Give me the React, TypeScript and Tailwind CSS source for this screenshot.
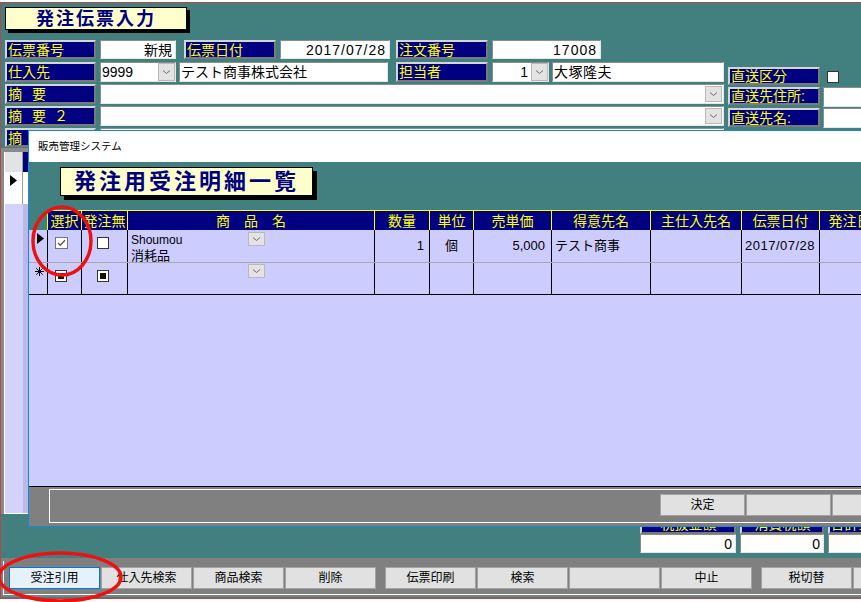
import React from "react";

const LABEL =
  "shrink-0 flex items-center bg-[#000080] text-[#ffff00] leading-none pl-[1px] border-2 border-t-[#d6d6d6] border-l-[#d6d6d6] border-r-[#7a7a7a] border-b-[#7a7a7a] whitespace-nowrap overflow-hidden";
const FIELD =
  "shrink-0 flex items-center bg-white text-black leading-none border border-t-[#8c8c8c] border-l-[#8c8c8c] border-r-[#e6e6e6] border-b-[#e6e6e6] whitespace-nowrap overflow-hidden";
const BTN =
  "shrink-0 flex items-center justify-center h-[22px] border text-[12px] leading-none text-black";
const HCELL =
  "border-l border-t border-[#ffff00] bg-[#000080] text-[#ffff00] text-[14px] leading-none flex items-center justify-center whitespace-nowrap overflow-hidden";
const DCELL = "border-l border-black flex overflow-hidden whitespace-nowrap";

function Chevron() {
  return (
    <svg width="9" height="6" viewBox="0 0 9 6">
      <path d="M1 1.5 L4.5 4.5 L8 1.5" fill="none" stroke="#6b6b6b" strokeWidth="1" />
    </svg>
  );
}

function DropBtn({ className }: { className: string }) {
  return (
    <div className={`shrink-0 flex items-center justify-center bg-[#e3e3e3] border border-[#b9b9b9] ${className}`}>
      <Chevron />
    </div>
  );
}

function Tri() {
  return (
    <svg width="7" height="11" viewBox="0 0 7 11">
      <path d="M0 0 L7 5.5 L0 11 Z" fill="#000" />
    </svg>
  );
}

function Star() {
  return (
    <svg width="9" height="9" viewBox="0 0 9 9">
      <g stroke="#000" strokeWidth="1">
        <line x1="4.5" y1="0" x2="4.5" y2="9" />
        <line x1="0" y1="4.5" x2="9" y2="4.5" />
        <line x1="1.3" y1="1.3" x2="7.7" y2="7.7" />
        <line x1="7.7" y1="1.3" x2="1.3" y2="7.7" />
      </g>
    </svg>
  );
}

function CheckedBox() {
  return (
    <svg width="13" height="12" viewBox="0 0 13 12">
      <rect x="0.5" y="0.5" width="12" height="11" fill="#fff" stroke="#000" strokeDasharray="1 1" />
      <path d="M3 6 L5.2 8.2 L10 3.2" fill="none" stroke="#555" strokeWidth="1.3" />
    </svg>
  );
}

function NullBox() {
  return (
    <div className="w-[12px] h-[12px] bg-white border border-[#333] flex items-center justify-center">
      <div className="w-[6px] h-[6px] bg-[#111]" />
    </div>
  );
}

const COLS =
  "grid grid-cols-[18px_34px_46px_247px_55px_44px_78px_99px_91px_78px_74px]";

export default function App() {
  return (
    <div className="relative w-[861px] h-[602px] overflow-hidden bg-white pt-[2px] font-['Liberation_Sans','Noto_Sans_CJK_JP',sans-serif]">
      {/* main form */}
      <div className="h-[597px] bg-[#428080] border-t border-l border-b border-[#b24848] flex flex-col pl-[4px]">
        {/* title */}
        <div className="mt-[4px] w-[182px] h-[23px] shrink-0 bg-[#ffffcc] border border-black shadow-[3px_3px_0_0_#000] flex items-center justify-center text-[#000080] text-[18px] font-bold tracking-[2px] leading-none">
          発注伝票入力
        </div>

        {/* row 1 */}
        <div className="mt-[10px] h-[19px] flex shrink-0">
          <div className={`${LABEL} w-[91px] h-[19px] text-[14px]`}>伝票番号</div>
          <div className={`${FIELD} ml-[4px] w-[76px] h-[19px] justify-end pr-[3px] text-[14px]`}>新規</div>
          <div className={`${LABEL} ml-[8px] w-[92px] h-[19px] text-[14px]`}>伝票日付</div>
          <div className={`${FIELD} ml-[4px] w-[110px] h-[19px] justify-end pr-[3px] text-[14px] tracking-[1px]`}>2017/07/28</div>
          <div className={`${LABEL} ml-[6px] w-[92px] h-[19px] text-[14px]`}>注文番号</div>
          <div className={`${FIELD} ml-[4px] w-[109px] h-[19px] justify-end pr-[3px] text-[14px] tracking-[1px]`}>17008</div>
        </div>

        {/* row 2 */}
        <div className="mt-[3px] h-[20px] flex items-start shrink-0">
          <div className={`${LABEL} w-[91px] h-[20px] text-[14px]`}>仕入先</div>
          <div className={`${FIELD} ml-[4px] w-[76px] h-[20px] text-[14px]`}>
            <span className="flex-1 pl-[1px]">9999</span>
            <DropBtn className="w-[17px] h-[18px]" />
          </div>
          <div className={`${FIELD} ml-[3px] w-[209px] h-[20px] pl-[1px] text-[14px]`}>テスト商事株式会社</div>
          <div className={`${LABEL} ml-[8px] w-[92px] h-[20px] text-[14px]`}>担当者</div>
          <div className={`${FIELD} ml-[4px] w-[57px] h-[20px] text-[14px]`}>
            <span className="flex-1 text-right pr-[3px]">1</span>
            <DropBtn className="w-[17px] h-[18px]" />
          </div>
          <div className={`${FIELD} ml-[3px] w-[172px] h-[20px] pl-[1px] text-[14px] tracking-[0.5px]`}>大塚隆夫</div>
          <div className={`${LABEL} ml-[4px] mt-[5px] w-[92px] h-[18px] text-[14px]`}>直送区分</div>
          <div className="ml-[7px] mt-[9px] w-[12px] h-[12px] shrink-0 bg-white border border-[#333]" />
        </div>

        {/* row 3 */}
        <div className="mt-[2px] h-[20px] flex items-start shrink-0">
          <div className={`${LABEL} w-[91px] h-[20px] text-[14px]`}>
            <span>摘</span>
            <span className="ml-[10px]">要</span>
          </div>
          <div className={`${FIELD} ml-[4px] w-[624px] h-[20px] justify-end pr-[1px]`}>
            <DropBtn className="w-[17px] h-[16px]" />
          </div>
          <div className={`${LABEL} ml-[4px] mt-[3px] w-[92px] h-[18px] text-[14px]`}>直送先住所:</div>
          <div className={`${FIELD} ml-[3px] mt-[3px] w-[60px] h-[20px]`} />
        </div>

        {/* row 4 */}
        <div className="mt-[2px] h-[20px] flex items-start shrink-0">
          <div className={`${LABEL} w-[91px] h-[20px] text-[14px]`}>
            <span>摘</span>
            <span className="ml-[10px]">要</span>
            <span className="ml-[8px]">２</span>
          </div>
          <div className={`${FIELD} ml-[4px] w-[624px] h-[20px] justify-end pr-[1px]`}>
            <DropBtn className="w-[17px] h-[16px]" />
          </div>
          <div className={`${LABEL} ml-[4px] mt-[2px] w-[92px] h-[19px] text-[14px]`}>直送先名:</div>
          <div className={`${FIELD} ml-[3px] mt-[2px] w-[60px] h-[20px]`} />
        </div>

        {/* row 5 (mostly hidden) */}
        <div className="mt-[2px] h-[19px] flex items-start shrink-0">
          <div className={`${LABEL} w-[91px] h-[19px] text-[14px]`}>
            <span>摘</span>
            <span className="ml-[10px]">要</span>
            <span className="ml-[8px]">３</span>
          </div>
          <div className={`${FIELD} ml-[4px] w-[624px] h-[19px]`} />
        </div>

        {/* subform behind dialog */}
        <div className="mt-[1px] -ml-[4px] w-[860px] h-[366px] shrink-0 bg-[#8a8a8a] pl-[3px] pt-[4px] flex flex-col">
          <div className="flex-1 border-l border-b border-white flex flex-col bg-[#ccccff]">
            <div className="h-[20px] flex shrink-0">
              <div className="w-[18px] bg-[#e3e3e3] border-r border-[#a0a0a0]" />
              <div className="flex-1 bg-[#000080]" />
            </div>
            <div className="h-[32px] flex shrink-0">
              <div className="w-[18px] bg-white border-r border-[#a0a0a0] flex items-start justify-center pt-[3px]">
                <Tri />
              </div>
              <div className="flex-1 bg-white" />
            </div>
            <div className="flex-1 flex">
              <div className="w-[18px] bg-[#d2d2fb]" />
              <div className="flex-1 bg-[#b9b9ec]" />
            </div>
          </div>
        </div>

        {/* totals */}
        <div className="h-[20px] flex shrink-0 ml-[635px]">
          <div className={`${LABEL} w-[96px] h-[20px] justify-center text-[14px]`}>税抜金額</div>
          <div className={`${LABEL} ml-[4px] w-[84px] h-[20px] justify-center text-[14px]`}>消費税額</div>
          <div className={`${LABEL} ml-[4px] w-[60px] h-[20px] justify-center text-[14px]`}>合計金額</div>
        </div>
        <div className="h-[19px] flex shrink-0 ml-[635px]">
          <div className={`${FIELD} w-[96px] h-[19px] justify-end pr-[3px] text-[14px]`}>0</div>
          <div className={`${FIELD} ml-[4px] w-[84px] h-[19px] justify-end pr-[3px] text-[14px]`}>0</div>
          <div className={`${FIELD} ml-[4px] w-[60px] h-[19px] justify-end pr-[3px] text-[14px]`}>0</div>
        </div>

        {/* bottom button bar */}
        <div className="mt-[5px] -ml-[4px] h-[39px] shrink-0 bg-[#808080] pl-[2px] pt-[3px]">
          <div className="h-[34px] border-l border-b border-white flex items-start pl-[5px] pt-[6px] gap-[1px]">
            <div className={`${BTN} w-[91px] bg-[#e5f1fb] border-[#0078d7]`}>受注引用</div>
            <div className={`${BTN} w-[91px] bg-[#e1e1e1] border-[#a3a3a3]`}>仕入先検索</div>
            <div className={`${BTN} w-[91px] bg-[#e1e1e1] border-[#a3a3a3]`}>商品検索</div>
            <div className={`${BTN} w-[91px] bg-[#e1e1e1] border-[#a3a3a3]`}>削除</div>
            <div className={`${BTN} w-[91px] ml-[8px] bg-[#e1e1e1] border-[#a3a3a3]`}>伝票印刷</div>
            <div className={`${BTN} w-[91px] bg-[#e1e1e1] border-[#a3a3a3]`}>検索</div>
            <div className={`${BTN} w-[91px] bg-[#e1e1e1] border-[#a3a3a3]`} />
            <div className={`${BTN} w-[91px] bg-[#e1e1e1] border-[#a3a3a3]`}>中止</div>
            <div className={`${BTN} w-[91px] ml-[8px] bg-[#e1e1e1] border-[#a3a3a3]`}>税切替</div>
            <div className={`${BTN} w-[91px] bg-[#e1e1e1] border-[#a3a3a3]`} />
          </div>
        </div>
      </div>

      {/* dialog window */}
      <div className="absolute left-[28px] top-[130px] w-[860px] h-[397px] border border-[#1a86d9] bg-[#428080] flex flex-col overflow-hidden">
        <div className="h-[31px] shrink-0 bg-white flex items-center pl-[9px] text-[10.5px] text-black leading-none">
          販売管理システム
        </div>
        <div className="ml-[31px] mt-[5px] w-[253px] h-[29px] shrink-0 bg-[#ffffcc] border border-black shadow-[4px_4px_0_0_#000] flex items-center justify-center text-[#000080] text-[22px] font-bold tracking-[3px] leading-none">
          発注用受注明細一覧
        </div>

        {/* grid header */}
        <div className={`${COLS} mt-[14px] h-[20px] shrink-0`}>
          <div />
          <div className={HCELL}>選択</div>
          <div className={HCELL}>発注無</div>
          <div className={HCELL}>商　品　名</div>
          <div className={HCELL}>数量</div>
          <div className={HCELL}>単位</div>
          <div className={HCELL}>売単価</div>
          <div className={HCELL}>得意先名</div>
          <div className={HCELL}>主仕入先名</div>
          <div className={HCELL}>伝票日付</div>
          <div className={HCELL}>発注日付</div>
        </div>

        {/* row 1 */}
        <div className={`${COLS} h-[33px] shrink-0 bg-[#ccccff] border-b border-[#a8a8a8] text-black`}>
          <div className="flex pl-[8px] pt-[3px]">
            <Tri />
          </div>
          <div className={`${DCELL} pl-[7px] pt-[7px]`}>
            <CheckedBox />
          </div>
          <div className={`${DCELL} pl-[15px] pt-[7px]`}>
            <div className="w-[12px] h-[12px] bg-white border border-[#333]" />
          </div>
          <div className={`${DCELL} pl-[3px]`}>
            <div className="w-[117px] flex flex-col pt-[2px] text-[12px] leading-[16px]">
              <span>Shoumou</span>
              <span className="text-[13px]">消耗品</span>
            </div>
            <DropBtn className="mt-[2px] w-[17px] h-[14px]" />
          </div>
          <div className={`${DCELL} items-center justify-end pr-[5px] text-[13px]`}>1</div>
          <div className={`${DCELL} items-center justify-center text-[13px]`}>個</div>
          <div className={`${DCELL} items-center justify-end pr-[6px] text-[13px]`}>5,000</div>
          <div className={`${DCELL} items-center pl-[3px] text-[13px]`}>テスト商事</div>
          <div className={DCELL} />
          <div className={`${DCELL} items-center pl-[3px] text-[13px] tracking-[0.5px]`}>2017/07/28</div>
          <div className={DCELL} />
        </div>

        {/* row 2 (new record) */}
        <div className={`${COLS} h-[32px] shrink-0 bg-[#ccccff] border-b border-black`}>
          <div className="flex pl-[6px] pt-[4px]">
            <Star />
          </div>
          <div className={`${DCELL} pl-[7px] pt-[7px]`}>
            <NullBox />
          </div>
          <div className={`${DCELL} pl-[15px] pt-[7px]`}>
            <NullBox />
          </div>
          <div className={`${DCELL} pl-[120px]`}>
            <DropBtn className="mt-[1px] w-[17px] h-[14px]" />
          </div>
          <div className={DCELL} />
          <div className={DCELL} />
          <div className={DCELL} />
          <div className={DCELL} />
          <div className={DCELL} />
          <div className={DCELL} />
          <div className={DCELL} />
        </div>

        {/* empty area */}
        <div className="h-[192px] shrink-0 bg-[#ccccff] border-b border-black" />

        {/* footer */}
        <div className="h-[39px] shrink-0 bg-[#808080] pl-[20px] pt-[2px]">
          <div className="h-[34px] border border-white flex items-start pl-[610px] pt-[4px] gap-[1px]">
            <div className={`${BTN} w-[85px] bg-[#e1e1e1] border-[#a3a3a3]`}>決定</div>
            <div className={`${BTN} w-[85px] bg-[#e1e1e1] border-[#a3a3a3]`} />
            <div className={`${BTN} w-[85px] bg-[#e1e1e1] border-[#a3a3a3]`} />
          </div>
        </div>
      </div>

      {/* red annotation ellipses */}
      <svg className="absolute left-0 top-0 pointer-events-none" width="861" height="602" viewBox="0 0 861 602">
        <ellipse cx="62" cy="241" rx="29" ry="34" fill="none" stroke="#ee1111" strokeWidth="3.5" />
        <ellipse cx="60" cy="577" rx="61" ry="24" fill="none" stroke="#ee1111" strokeWidth="3.5" />
      </svg>
    </div>
  );
}
